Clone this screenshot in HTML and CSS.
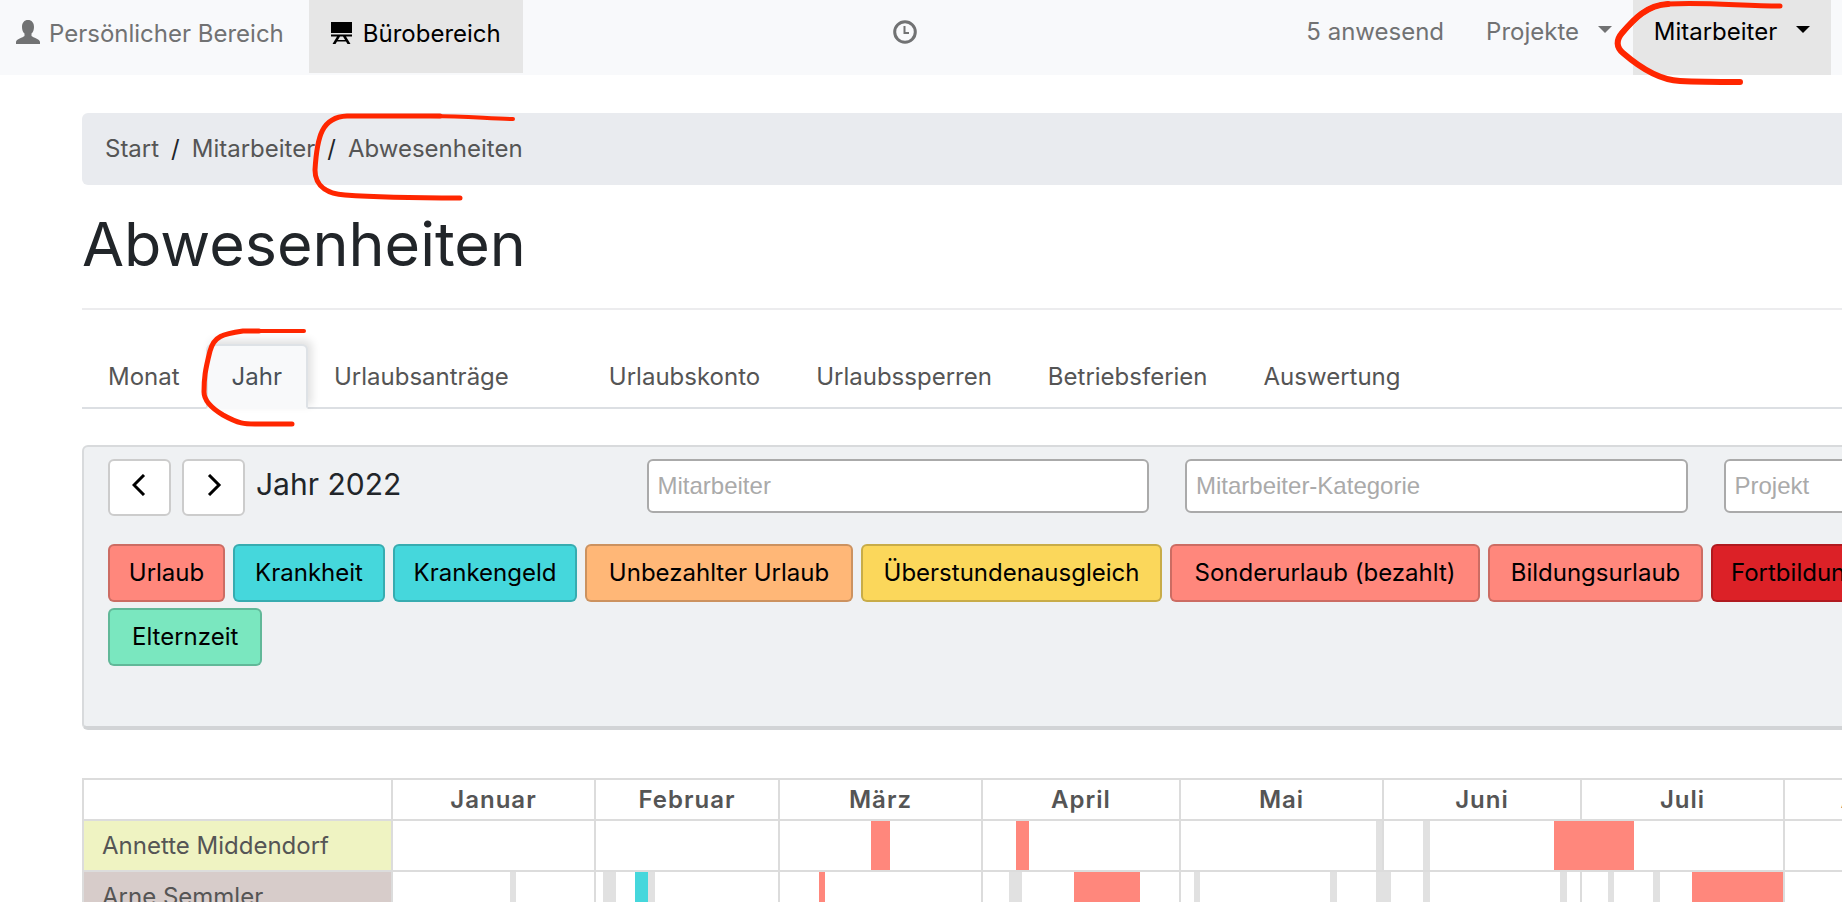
FILE: index.html
```
<!DOCTYPE html>
<html lang="de">
<head>
<meta charset="utf-8">
<title>Abwesenheiten</title>
<link rel="stylesheet" href="styles.css">
</head>
<body>
<header class="navbar">
  <nav class="areas" aria-label="Bereiche">
    <a class="area" href="#">
      <svg class="area-icon" viewBox="0 0 24 24" aria-hidden="true"><path d="M12 0C8.300 0 6 2.700 6 7c0 3 1 5.300 2.500 6.600V16C7 17.500 0 19 0 22v2h24v-2c0-3-7-4.500-8.500-6v-2.400C17 12.300 18 10 18 7c0-4.300-2.300-7-6-7z"/></svg>
      Persönlicher Bereich</a>
    <a class="area area-active" href="#">
      <svg class="area-icon" viewBox="0 0 24 24" aria-hidden="true"><path d="M1 2h21v11H1zM1 14.500h21v2H1zM7 16.500h3L5.500 24H2.500zM13 16.500h3l4.500 7.500h-3zM6 20h11v1.500H6z"/></svg>
      Bürobereich</a>
  </nav>
  <a class="clock" href="#" aria-label="Zeiterfassung">
    <svg viewBox="0 0 24 24" aria-hidden="true"><circle cx="12" cy="12" r="10.300"/><path d="M11.500 6v7H16"/></svg>
  </a>
  <nav class="menus" aria-label="Menü">
    <a class="menu" href="#">5 anwesend</a>
    <a class="menu" href="#">Projekte <i class="caret"></i></a>
    <a class="menu menu-active" href="#">Mitarbeiter <i class="caret"></i></a>
  </nav>
  <svg class="mark mark-menu" viewBox="0 0 176 90" aria-hidden="true"><path stroke-width="5" d="M168 6C130 6 95 2 56 4C35 5 22 19 10 33"/><path d="M56 4C35 5 22 19 10 33C4 40 4 47 11 53C26 66 46 80 68 81C88 82 108 82 128 82"/></svg>
</header>

<main class="page">
  <nav class="breadcrumb" aria-label="Pfad">
    <a href="#">Start</a><span>/</span><a href="#">Mitarbeiter</a><span>/</span><a href="#">Abwesenheiten</a>
    <svg class="mark mark-crumb" viewBox="0 0 210 94" aria-hidden="true"><path stroke-width="4" d="M203 9C180 9 160 6 120 6"/><path d="M130 6C110 6 70 6 37 6C12 7 7 26 5 60C5 78 20 84 35 85C75 88 110 88 150 88"/></svg>
  </nav>
  <h1>Abwesenheiten</h1>
  <div class="tabs">
    <a class="tab" href="#">Monat</a>
    <a class="tab tab-active" href="#">Jahr
      <svg class="mark mark-tab" viewBox="0 0 110 104" aria-hidden="true"><path stroke-width="4" d="M105 5H45"/><path d="M60 5H44C24 8 15 10 11 25C6 45 5 52 5 66C5 75 14 83 24 89C40 98 46 98 56 98H93"/></svg>
    </a>
    <a class="tab" href="#">Urlaubsanträge</a>
    <a class="tab tab-wide tab-apart" href="#">Urlaubskonto</a>
    <a class="tab tab-wide" href="#">Urlaubssperren</a>
    <a class="tab tab-wide" href="#">Betriebsferien</a>
    <a class="tab tab-wide" href="#">Auswertung</a>
  </div>

  <section class="panel">
    <div class="filters">
      <div class="period">
        <button class="step" type="button" aria-label="Voriges Jahr"><svg viewBox="0 0 16 22" aria-hidden="true"><path d="M12 1L2 11l10 10"/></svg></button>
        <button class="step" type="button" aria-label="Nächstes Jahr"><svg viewBox="0 0 16 22" aria-hidden="true"><path d="M3 1l10 10L3 21"/></svg></button>
        <span class="period-name">Jahr 2022</span>
      </div>
      <input type="text" placeholder="Mitarbeiter" aria-label="Mitarbeiter">
      <input type="text" placeholder="Mitarbeiter-Kategorie" aria-label="Mitarbeiter-Kategorie">
      <input type="text" placeholder="Projekt" aria-label="Projekt">
    </div>
    <div class="kinds">
      <button class="kind leave" type="button">Urlaub</button>
      <button class="kind sick" type="button">Krankheit</button>
      <button class="kind sick" type="button">Krankengeld</button>
      <button class="kind unpaid" type="button">Unbezahlter Urlaub</button>
      <button class="kind overtime" type="button">Überstundenausgleich</button>
      <button class="kind leave" type="button">Sonderurlaub (bezahlt)</button>
      <button class="kind leave" type="button">Bildungsurlaub</button>
      <button class="kind training" type="button">Fortbildung</button>
      <button class="kind parental" type="button">Elternzeit</button>
    </div>
  </section>

  <table class="year">
    <colgroup><col class="c-name"><col class="c-31"><col class="c-28"><col class="c-31"><col class="c-30"><col class="c-31"><col class="c-30"><col class="c-31"><col class="c-31"></colgroup>
    <thead>
      <tr><td></td><th scope="col">Januar</th><th scope="col">Februar</th><th scope="col">März</th><th scope="col">April</th><th scope="col">Mai</th><th scope="col">Juni</th><th scope="col">Juli</th><th scope="col">August</th></tr>
    </thead>
    <tbody>
      <tr>
        <th class="person lime" scope="row">Annette Middendorf</th>
        <td class="m31"></td>
        <td class="m28"></td>
        <td class="m31"><i class="bar leave" style="--from:14;--days:3"></i></td>
        <td class="m30"><i class="bar leave" style="--from:5;--days:2"></i></td>
        <td class="m31"><i class="bar free" style="--from:30;--days:1"></i></td>
        <td class="m30"><i class="bar free" style="--from:6;--days:1"></i><i class="bar leave through" style="--from:26;--days:4"></i></td>
        <td class="m31"><i class="bar leave" style="--from:0;--days:8"></i></td>
        <td class="m31"></td>
      </tr>
      <tr>
        <th class="person mauve" scope="row">Arne Semmler</th>
        <td class="m31"><i class="bar free" style="--from:18;--days:1"></i></td>
        <td class="m28"><i class="bar free" style="--from:1;--days:2"></i><i class="bar sick" style="--from:6;--days:2"></i><i class="bar free" style="--from:8;--days:1"></i></td>
        <td class="m31"><i class="bar leave" style="--from:6;--days:1"></i></td>
        <td class="m30"><i class="bar free" style="--from:4;--days:2"></i><i class="bar leave" style="--from:14;--days:10"></i></td>
        <td class="m31"><i class="bar free" style="--from:2;--days:1"></i><i class="bar free" style="--from:23;--days:1"></i><i class="bar free through" style="--from:30;--days:1"></i></td>
        <td class="m30"><i class="bar free" style="--from:0;--days:1"></i><i class="bar free" style="--from:6;--days:1"></i><i class="bar free" style="--from:27;--days:1"></i></td>
        <td class="m31"><i class="bar free" style="--from:4;--days:1"></i><i class="bar free" style="--from:11;--days:1"></i><i class="bar leave" style="--from:17;--days:14"></i></td>
        <td class="m31"></td>
      </tr>
    </tbody>
  </table>
</main>
</body>
</html>
```
FILE: styles.css
```
* { box-sizing: border-box; }

body {
  margin: 0;
  height: 100vh;
  overflow: hidden;
  background: #fff;
  color: #212529;
  font-family: Inter, "Liberation Sans", sans-serif;
  font-size: 24px;
  line-height: 36px;
}

a { color: inherit; text-decoration: none; }

/* top bar */
.navbar {
  position: relative;
  display: flex;
  justify-content: space-between;
  height: 75px;
  padding-right: 11px;
  background: #f8f9fb;
  color: #717273;
}
.areas, .menus { display: flex; flex: 1; white-space: nowrap; }
.menus { justify-content: flex-end; }
.area {
  display: flex;
  gap: 9px;
  height: 73px;
  padding: 16px 25px 0 16px;
}
.area-active { padding: 16px 22px 0 21px; background: #e6e6e6; color: #000; }
.area-icon { width: 24px; height: 24px; margin-top: 4px; fill: currentColor; }
.clock { margin-right: 22px; padding-top: 20px; }
.clock svg {
  display: block;
  width: 24px;
  height: 24px;
  fill: none;
  stroke: currentColor;
  stroke-width: 3;
}
.clock path { stroke-width: 2; }
.menu { padding: 14px 21px 0; }
.menu-active { background: #e6e6e6; color: #000; }
.caret {
  display: inline-block;
  margin-left: 12px;
  vertical-align: 7px;
  border-top: 7px solid;
  border-left: 7px solid transparent;
  border-right: 7px solid transparent;
}

/* hand-drawn marks */
.mark {
  position: absolute;
  z-index: 2;
  fill: none;
  stroke: #ff2600;
  stroke-width: 6;
  stroke-linecap: round;
  stroke-linejoin: round;
  pointer-events: none;
}
.mark-menu { top: 0; right: 54px; width: 176px; height: 90px; }
.mark-crumb { top: -3px; left: 228px; width: 210px; height: 94px; stroke-width: 5; }
.mark-tab { top: -20px; left: -9px; width: 110px; height: 104px; stroke-width: 5; }

/* page */
.page { width: calc(100% + 410px); padding: 38px 0 0 82px; }

.breadcrumb {
  position: relative;
  display: flex;
  gap: 12px;
  padding: 18px 23px;
  border-radius: 6px;
  background: #e9ebef;
}
.breadcrumb a { color: #555; }

h1 {
  margin: 23px 0 0;
  padding-bottom: 28px;
  border-bottom: 2px solid #ececee;
  font-size: 61px;
  font-weight: 400;
  line-height: 72px;
}

.tabs {
  display: flex;
  margin-top: 34px;
  border-bottom: 2px solid #dcdfe3;
}
.tab {
  position: relative;
  margin-bottom: -2px;
  padding: 13px 24px 12px;
  border: 2px solid transparent;
  border-radius: 6px 6px 0 0;
  color: #555;
}
.tab-active {
  border-color: #dee2e6 #dee2e6 #f8f9fa;
  background: #f8f9fa;
  box-shadow: 4px -4px 8px rgba(0, 0, 0, .12);
  color: #495057;
}
.tab-wide { padding-right: 26px; padding-left: 26px; }
.tab-apart { margin-left: 46px; }

/* filter panel */
.panel {
  min-height: 285px;
  margin-top: 36px;
  padding: 12px 24px;
  border: 2px solid #d8dadc;
  border-bottom: 4px solid #d2d4d6;
  border-radius: 6px;
  background: #eff1f3;
}
.filters {
  display: grid;
  grid-template-columns: repeat(4, 1fr);
  gap: 36px;
  align-items: start;
}
.period { display: flex; gap: 11px; }
.step {
  display: grid;
  place-items: center;
  width: 63px;
  height: 57px;
  padding: 0 0 5px;
  border: 2px solid #ccc;
  border-radius: 6px;
  background: #fff;
}
.step svg { width: 16px; height: 22px; fill: none; stroke: #000; stroke-width: 3; }
.period-name { padding-top: 7px; font-size: 30px; }
.filters input {
  width: 100%;
  height: 54px;
  padding: 0 9px;
  border: 2px solid #aaa;
  border-radius: 6px;
  background: #fff;
  font: 24px "Liberation Sans", sans-serif;
}
.filters input::placeholder { color: #aaa; opacity: 1; }

.kinds {
  display: grid;
  grid-template-columns: 117px 152px 184px 268px 301px 310px 215px max-content;
  gap: 6px 8px;
  margin-top: 28px;
}
.kind {
  height: 58px;
  padding: 0;
  border: 2px solid rgba(0, 0, 0, .2);
  border-radius: 6px;
  color: #000;
  font: inherit;
}
.leave { background-color: #ff877c; }
.sick { background-color: #45d7dc; }
.unpaid { background-color: #ffb777; }
.overtime { background-color: #fbd75b; }
.training { padding: 0 18px; background-color: #dc2127; }
.parental {
  grid-column: 1 / 3;
  justify-self: start;
  padding: 0 22px;
  background-color: #7ae7bf;
}
.free { background-color: #e1e1e1; }

/* year table */
.year {
  width: 1906px;
  margin-top: 48px;
  border: solid #dcdcdc;
  border-width: 2px 0 0 2px;
  border-spacing: 0;
  table-layout: fixed;
  color: #555;
}
.c-name { width: 309px; }
.c-28 { width: 184px; }
.c-30 { width: 198px; }
.c-31 { width: 203px; }
.year td, .year th {
  position: relative;
  height: 51px;
  padding: 0;
  border: solid #dcdcdc;
  border-width: 0 2px 2px 0;
}
.year thead td, .year thead th { height: 41px; font-weight: 600; letter-spacing: 1px; }
.year .person { padding-left: 18px; font-weight: 400; text-align: left; }
.lime { background: #eff3c2; }
.mauve { background: #d7ccca; }

.m28 { --month: 28; }
.m30 { --month: 30; }
.m31 { --month: 31; }
.bar {
  position: absolute;
  top: 0;
  bottom: 0;
  left: calc(100% * var(--from) / var(--month));
  width: calc(100% * var(--days) / var(--month));
}
.through { box-sizing: content-box; border-right: 2px solid #e1e1e1; }
.through.leave { border-color: #ff877c; }
```
